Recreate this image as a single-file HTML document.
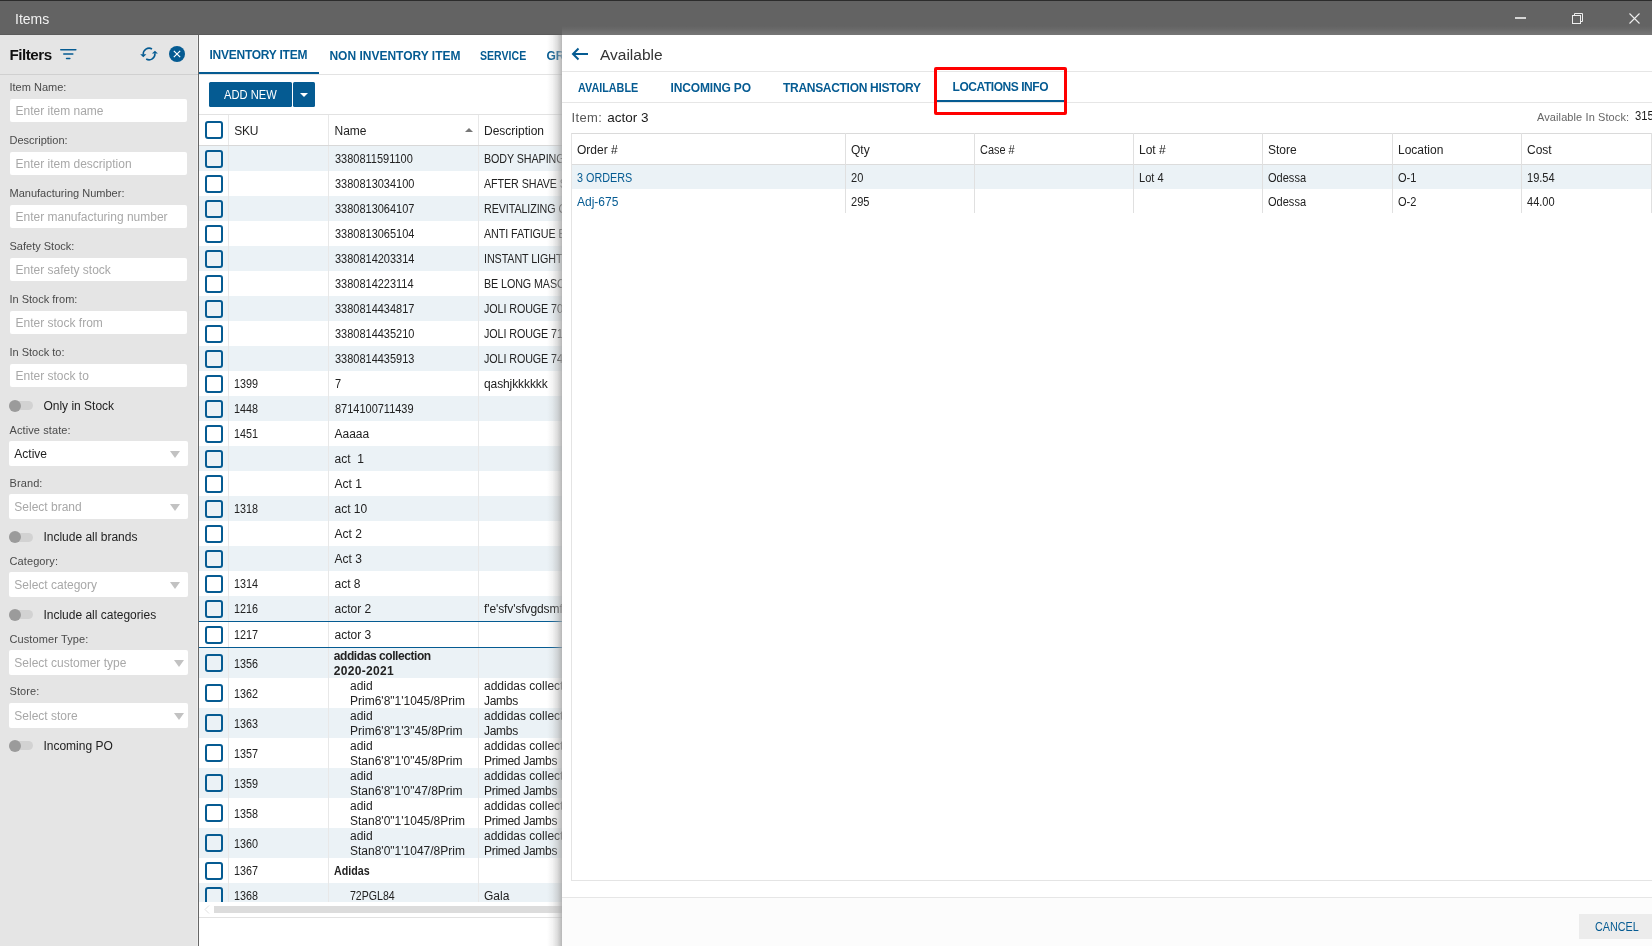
<!DOCTYPE html>
<html><head><meta charset="utf-8"><style>
html,body{margin:0;padding:0;}
body{width:1652px;height:946px;position:relative;overflow:hidden;background:#fff;font-family:"Liberation Sans",sans-serif;color:#222;}
.t{position:absolute;white-space:pre;}
.r{position:absolute;}
#root{position:absolute;left:0;top:0;width:1652px;height:946px;will-change:transform;}
</style></head><body>
<div id="root">
<div class="r" style="left:0px;top:0px;width:1652px;height:35px;background:linear-gradient(#2c2c2c 0px,#2c2c2c 1px,#636363 1px);"></div>
<div class="r" style="left:0px;top:34px;width:562px;height:1px;background:#5b5b5b;"></div>
<div class="r" style="left:562px;top:26px;width:1090px;height:9px;background:linear-gradient(rgba(255,255,255,0),rgba(255,255,255,0.03) 30%,rgba(255,255,255,0.09) 70%,rgba(255,255,255,0.12));"></div>
<div class="t" style="left:15px;top:12.15px;font-size:14px;line-height:14px;color:#f2f2f2;">Items</div>
<div class="r" style="left:1515px;top:17px;width:11px;height:2px;background:#d6d6d6;"></div>
<svg class="r" style="left:1570px;top:10.5px" width="16" height="14" viewBox="0 0 16 14"><rect x="2.5" y="4.5" width="8" height="8" fill="none" stroke="#eee" stroke-width="1"/><path d="M4.5 4.5 V2.5 H12.5 V10.5 H10.5" fill="none" stroke="#eee" stroke-width="1"/></svg>
<svg class="r" style="left:1629px;top:12.5px" width="11" height="11" viewBox="0 0 11 11"><path d="M0.5 0.5 L10.5 10.5 M10.5 0.5 L0.5 10.5" stroke="#eee" stroke-width="1.1"/></svg>
<div class="r" style="left:0px;top:35px;width:198px;height:911px;background:#e5e5e5;"></div>
<div class="r" style="left:197px;top:35px;width:1px;height:911px;background:#eeeeee;"></div>
<div class="r" style="left:198px;top:35px;width:1px;height:911px;background:#666666;"></div>
<div class="t" style="left:9.5px;top:47.43px;font-size:15.2px;line-height:15.2px;font-weight:700;color:#111;letter-spacing:-0.5px;">Filters</div>
<svg class="r" style="left:58px;top:46px" width="20" height="16" viewBox="0 0 20 16"><path d="M2.8 3.7 H17.8 M5.8 8 H14.8 M8.6 12.5 H11.8" stroke="#055b92" stroke-width="1.6" stroke-linecap="round"/></svg>
<svg class="r" style="left:139px;top:46px" width="20" height="16" viewBox="0 0 20 16"><path d="M4.3 8.6 A5.8 5.8 0 0 1 13.0 3.0" fill="none" stroke="#055b92" stroke-width="1.6"/><path d="M15.9 7.4 A5.8 5.8 0 0 1 7.2 13.0" fill="none" stroke="#055b92" stroke-width="1.6"/><path d="M1.2 8.3 L7.4 8.3 L4.3 11.3 Z" fill="#055b92"/><path d="M12.9 7.6 L18.9 7.6 L15.9 4.7 Z" fill="#055b92"/></svg>
<svg class="r" style="left:169px;top:46px" width="16" height="16" viewBox="0 0 16 16"><circle cx="8" cy="8" r="8" fill="#055b92"/><path d="M4.8 4.8 L11.2 11.2 M11.2 4.8 L4.8 11.2" stroke="#fff" stroke-width="1.2"/></svg>
<div class="r" style="left:0px;top:74px;width:198px;height:1px;background:#d0d0d0;"></div>
<div class="t" style="left:9.5px;top:81.69px;font-size:11px;line-height:11px;color:#4a4a4a;">Item Name:</div>
<div class="r" style="left:10px;top:99px;width:177px;height:23px;background:#fff;border-radius:2px;"></div>
<div class="t" style="left:15.5px;top:104.84px;font-size:12px;line-height:12px;color:#a8a8a8;">Enter item name</div>
<div class="t" style="left:9.5px;top:134.69px;font-size:11px;line-height:11px;color:#4a4a4a;">Description:</div>
<div class="r" style="left:10px;top:152px;width:177px;height:23px;background:#fff;border-radius:2px;"></div>
<div class="t" style="left:15.5px;top:157.84px;font-size:12px;line-height:12px;color:#a8a8a8;">Enter item description</div>
<div class="t" style="left:9.5px;top:187.69px;font-size:11px;line-height:11px;color:#4a4a4a;">Manufacturing Number:</div>
<div class="r" style="left:10px;top:205px;width:177px;height:23px;background:#fff;border-radius:2px;"></div>
<div class="t" style="left:15.5px;top:210.84px;font-size:12px;line-height:12px;color:#a8a8a8;">Enter manufacturing number</div>
<div class="t" style="left:9.5px;top:240.69px;font-size:11px;line-height:11px;color:#4a4a4a;">Safety Stock:</div>
<div class="r" style="left:10px;top:258px;width:177px;height:23px;background:#fff;border-radius:2px;"></div>
<div class="t" style="left:15.5px;top:263.84px;font-size:12px;line-height:12px;color:#a8a8a8;">Enter safety stock</div>
<div class="t" style="left:9.5px;top:293.69px;font-size:11px;line-height:11px;color:#4a4a4a;">In Stock from:</div>
<div class="r" style="left:10px;top:311px;width:177px;height:23px;background:#fff;border-radius:2px;"></div>
<div class="t" style="left:15.5px;top:316.84px;font-size:12px;line-height:12px;color:#a8a8a8;">Enter stock from</div>
<div class="t" style="left:9.5px;top:346.69px;font-size:11px;line-height:11px;color:#4a4a4a;">In Stock to:</div>
<div class="r" style="left:10px;top:364px;width:177px;height:23px;background:#fff;border-radius:2px;"></div>
<div class="t" style="left:15.5px;top:369.84px;font-size:12px;line-height:12px;color:#a8a8a8;">Enter stock to</div>
<div class="r" style="left:9px;top:401.0px;width:24px;height:9px;background:#d2d2d2;border-radius:5px;"></div>
<div class="r" style="left:9px;top:399.5px;width:12px;height:12px;background:#9b9b9b;border-radius:50%;"></div>
<div class="t" style="left:43.4px;top:399.84px;font-size:12px;line-height:12px;color:#1e1e1e;">Only in Stock</div>
<div class="t" style="left:9.5px;top:424.69px;font-size:11px;line-height:11px;color:#4a4a4a;letter-spacing:0.1px;">Active state:</div>
<div class="r" style="left:9px;top:441px;width:179px;height:25px;background:#fff;border-radius:2px;"></div>
<div class="t" style="left:14.3px;top:447.84px;font-size:12px;line-height:12px;color:#1e1e1e;">Active</div>
<svg class="r" style="left:170px;top:451px" width="10" height="7" viewBox="0 0 10 7"><path d="M0 0 H10 L5 7 Z" fill="#c2c2c2"/></svg>
<div class="t" style="left:9.5px;top:477.69px;font-size:11px;line-height:11px;color:#4a4a4a;letter-spacing:0.1px;">Brand:</div>
<div class="r" style="left:9px;top:494px;width:179px;height:25px;background:#fff;border-radius:2px;"></div>
<div class="t" style="left:14.3px;top:500.84px;font-size:12px;line-height:12px;color:#a8a8a8;">Select brand</div>
<svg class="r" style="left:170px;top:504px" width="10" height="7" viewBox="0 0 10 7"><path d="M0 0 H10 L5 7 Z" fill="#c2c2c2"/></svg>
<div class="r" style="left:9px;top:532.5px;width:24px;height:9px;background:#d2d2d2;border-radius:5px;"></div>
<div class="r" style="left:9px;top:531px;width:12px;height:12px;background:#9b9b9b;border-radius:50%;"></div>
<div class="t" style="left:43.4px;top:531.34px;font-size:12px;line-height:12px;color:#1e1e1e;">Include all brands</div>
<div class="t" style="left:9.5px;top:555.69px;font-size:11px;line-height:11px;color:#4a4a4a;letter-spacing:0.1px;">Category:</div>
<div class="r" style="left:9px;top:572px;width:179px;height:25px;background:#fff;border-radius:2px;"></div>
<div class="t" style="left:14.3px;top:578.84px;font-size:12px;line-height:12px;color:#a8a8a8;">Select category</div>
<svg class="r" style="left:170px;top:582px" width="10" height="7" viewBox="0 0 10 7"><path d="M0 0 H10 L5 7 Z" fill="#c2c2c2"/></svg>
<div class="r" style="left:9px;top:610.0px;width:24px;height:9px;background:#d2d2d2;border-radius:5px;"></div>
<div class="r" style="left:9px;top:608.5px;width:12px;height:12px;background:#9b9b9b;border-radius:50%;"></div>
<div class="t" style="left:43.4px;top:608.84px;font-size:12px;line-height:12px;color:#1e1e1e;">Include all categories</div>
<div class="t" style="left:9.5px;top:633.69px;font-size:11px;line-height:11px;color:#4a4a4a;letter-spacing:0.1px;">Customer Type:</div>
<div class="r" style="left:9px;top:650px;width:179px;height:25px;background:#fff;border-radius:2px;"></div>
<div class="t" style="left:14.3px;top:656.84px;font-size:12px;line-height:12px;color:#a8a8a8;">Select customer type</div>
<svg class="r" style="left:174px;top:660px" width="10" height="7" viewBox="0 0 10 7"><path d="M0 0 H10 L5 7 Z" fill="#c2c2c2"/></svg>
<div class="t" style="left:9.5px;top:686.19px;font-size:11px;line-height:11px;color:#4a4a4a;letter-spacing:0.1px;">Store:</div>
<div class="r" style="left:9px;top:703px;width:179px;height:25px;background:#fff;border-radius:2px;"></div>
<div class="t" style="left:14.3px;top:709.84px;font-size:12px;line-height:12px;color:#a8a8a8;">Select store</div>
<svg class="r" style="left:174px;top:713px" width="10" height="7" viewBox="0 0 10 7"><path d="M0 0 H10 L5 7 Z" fill="#c2c2c2"/></svg>
<div class="r" style="left:9px;top:741.0px;width:24px;height:9px;background:#d2d2d2;border-radius:5px;"></div>
<div class="r" style="left:9px;top:739.5px;width:12px;height:12px;background:#9b9b9b;border-radius:50%;"></div>
<div class="t" style="left:43.4px;top:739.84px;font-size:12px;line-height:12px;color:#1e1e1e;">Incoming PO</div>
<div class="r" style="left:199px;top:35px;width:363px;height:911px;background:#fff;"></div>
<div class="t" style="left:209.5px;top:48.84px;font-size:12px;line-height:12px;font-weight:700;color:#055b92;letter-spacing:-0.25px;">INVENTORY ITEM</div>
<div class="t" style="left:329.4px;top:49.84px;font-size:12px;line-height:12px;font-weight:700;color:#055b92;">NON INVENTORY ITEM</div>
<div class="t" style="left:480px;top:49.84px;font-size:12px;line-height:12px;transform:scaleX(0.88);transform-origin:0 0;font-weight:700;color:#055b92;">SERVICE</div>
<div class="t" style="left:546.6px;top:49.84px;font-size:12px;line-height:12px;font-weight:700;color:#055b92;letter-spacing:-0.25px;">GROUPS</div>
<div class="r" style="left:199px;top:74px;width:363px;height:1px;background:#e3e3e3;"></div>
<div class="r" style="left:199px;top:72px;width:120px;height:2px;background:#055b92;"></div>
<div class="r" style="left:209px;top:82px;width:83px;height:25px;background:#055b92;border-radius:1.5px;"></div>
<div class="t" style="left:224px;top:88.84px;font-size:12px;line-height:12px;transform:scaleX(0.93);transform-origin:0 0;color:#fff;">ADD NEW</div>
<div class="r" style="left:293px;top:82px;width:22px;height:25px;background:#055b92;border-radius:1.5px;"></div>
<svg class="r" style="left:299.8px;top:93.3px" width="8" height="4" viewBox="0 0 8 4"><path d="M0 0 H8 L4 4 Z" fill="#fff"/></svg>
<div class="r" style="left:199px;top:114px;width:363px;height:1px;background:#e2e2e2;"></div>
<div class="r" style="left:199px;top:145px;width:363px;height:1px;background:#d8d8d8;"></div>
<div class="r" style="left:205px;top:121px;width:18px;height:18px;background:transparent;box-sizing:border-box;border:2px solid #055b92;border-radius:3px;"></div>
<div class="t" style="left:234.3px;top:124.84px;font-size:12px;line-height:12px;letter-spacing:-0.3px;">SKU</div>
<div class="t" style="left:334.5px;top:124.84px;font-size:12px;line-height:12px;">Name</div>
<div class="t" style="left:484px;top:124.84px;font-size:12px;line-height:12px;">Description</div>
<svg class="r" style="left:465px;top:128px" width="8" height="4" viewBox="0 0 8 4"><path d="M0 4 H8 L4 0 Z" fill="#777"/></svg>
<div class="r" style="left:199px;top:146px;width:363px;height:25px;background:#ebf2f6;"></div>
<div class="r" style="left:205px;top:150px;width:18px;height:18px;background:transparent;box-sizing:border-box;border:2px solid #055b92;border-radius:3px;"></div>
<div class="t" style="left:334.5px;top:152.84px;font-size:12px;line-height:12px;transform:scaleX(0.915);transform-origin:0 0;">3380811591100</div>
<div class="t" style="left:484px;top:152.84px;font-size:12px;line-height:12px;transform:scaleX(0.895);transform-origin:0 0;letter-spacing:-0.1px;">BODY SHAPING CREAM</div>
<div class="r" style="left:205px;top:175px;width:18px;height:18px;background:transparent;box-sizing:border-box;border:2px solid #055b92;border-radius:3px;"></div>
<div class="t" style="left:334.5px;top:177.84px;font-size:12px;line-height:12px;transform:scaleX(0.915);transform-origin:0 0;">3380813034100</div>
<div class="t" style="left:484px;top:177.84px;font-size:12px;line-height:12px;transform:scaleX(0.895);transform-origin:0 0;letter-spacing:-0.1px;">AFTER SHAVE SPLASH</div>
<div class="r" style="left:199px;top:196px;width:363px;height:25px;background:#ebf2f6;"></div>
<div class="r" style="left:205px;top:200px;width:18px;height:18px;background:transparent;box-sizing:border-box;border:2px solid #055b92;border-radius:3px;"></div>
<div class="t" style="left:334.5px;top:202.84px;font-size:12px;line-height:12px;transform:scaleX(0.915);transform-origin:0 0;">3380813064107</div>
<div class="t" style="left:484px;top:202.84px;font-size:12px;line-height:12px;transform:scaleX(0.895);transform-origin:0 0;letter-spacing:-0.1px;">REVITALIZING CREAM</div>
<div class="r" style="left:205px;top:225px;width:18px;height:18px;background:transparent;box-sizing:border-box;border:2px solid #055b92;border-radius:3px;"></div>
<div class="t" style="left:334.5px;top:227.84px;font-size:12px;line-height:12px;transform:scaleX(0.915);transform-origin:0 0;">3380813065104</div>
<div class="t" style="left:484px;top:227.84px;font-size:12px;line-height:12px;transform:scaleX(0.895);transform-origin:0 0;letter-spacing:-0.1px;">ANTI FATIGUE EYE</div>
<div class="r" style="left:199px;top:246px;width:363px;height:25px;background:#ebf2f6;"></div>
<div class="r" style="left:205px;top:250px;width:18px;height:18px;background:transparent;box-sizing:border-box;border:2px solid #055b92;border-radius:3px;"></div>
<div class="t" style="left:334.5px;top:252.84px;font-size:12px;line-height:12px;transform:scaleX(0.915);transform-origin:0 0;">3380814203314</div>
<div class="t" style="left:484px;top:252.84px;font-size:12px;line-height:12px;transform:scaleX(0.895);transform-origin:0 0;letter-spacing:-0.1px;">INSTANT LIGHT</div>
<div class="r" style="left:205px;top:275px;width:18px;height:18px;background:transparent;box-sizing:border-box;border:2px solid #055b92;border-radius:3px;"></div>
<div class="t" style="left:334.5px;top:277.84px;font-size:12px;line-height:12px;transform:scaleX(0.915);transform-origin:0 0;">3380814223114</div>
<div class="t" style="left:484px;top:277.84px;font-size:12px;line-height:12px;transform:scaleX(0.895);transform-origin:0 0;letter-spacing:-0.1px;">BE LONG MASCARA</div>
<div class="r" style="left:199px;top:296px;width:363px;height:25px;background:#ebf2f6;"></div>
<div class="r" style="left:205px;top:300px;width:18px;height:18px;background:transparent;box-sizing:border-box;border:2px solid #055b92;border-radius:3px;"></div>
<div class="t" style="left:334.5px;top:302.84px;font-size:12px;line-height:12px;transform:scaleX(0.915);transform-origin:0 0;">3380814434817</div>
<div class="t" style="left:484px;top:302.84px;font-size:12px;line-height:12px;transform:scaleX(0.895);transform-origin:0 0;letter-spacing:-0.1px;">JOLI ROUGE 70</div>
<div class="r" style="left:205px;top:325px;width:18px;height:18px;background:transparent;box-sizing:border-box;border:2px solid #055b92;border-radius:3px;"></div>
<div class="t" style="left:334.5px;top:327.84px;font-size:12px;line-height:12px;transform:scaleX(0.915);transform-origin:0 0;">3380814435210</div>
<div class="t" style="left:484px;top:327.84px;font-size:12px;line-height:12px;transform:scaleX(0.895);transform-origin:0 0;letter-spacing:-0.1px;">JOLI ROUGE 71</div>
<div class="r" style="left:199px;top:346px;width:363px;height:25px;background:#ebf2f6;"></div>
<div class="r" style="left:205px;top:350px;width:18px;height:18px;background:transparent;box-sizing:border-box;border:2px solid #055b92;border-radius:3px;"></div>
<div class="t" style="left:334.5px;top:352.84px;font-size:12px;line-height:12px;transform:scaleX(0.915);transform-origin:0 0;">3380814435913</div>
<div class="t" style="left:484px;top:352.84px;font-size:12px;line-height:12px;transform:scaleX(0.895);transform-origin:0 0;letter-spacing:-0.1px;">JOLI ROUGE 74</div>
<div class="r" style="left:205px;top:375px;width:18px;height:18px;background:transparent;box-sizing:border-box;border:2px solid #055b92;border-radius:3px;"></div>
<div class="t" style="left:234.3px;top:377.84px;font-size:12px;line-height:12px;transform:scaleX(0.9);transform-origin:0 0;">1399</div>
<div class="t" style="left:334.5px;top:377.84px;font-size:12px;line-height:12px;transform:scaleX(0.915);transform-origin:0 0;">7</div>
<div class="t" style="left:484px;top:377.84px;font-size:12px;line-height:12px;letter-spacing:-0.1px;">qashjkkkkkk</div>
<div class="r" style="left:199px;top:396px;width:363px;height:25px;background:#ebf2f6;"></div>
<div class="r" style="left:205px;top:400px;width:18px;height:18px;background:transparent;box-sizing:border-box;border:2px solid #055b92;border-radius:3px;"></div>
<div class="t" style="left:234.3px;top:402.84px;font-size:12px;line-height:12px;transform:scaleX(0.9);transform-origin:0 0;">1448</div>
<div class="t" style="left:334.5px;top:402.84px;font-size:12px;line-height:12px;transform:scaleX(0.915);transform-origin:0 0;">8714100711439</div>
<div class="r" style="left:205px;top:425px;width:18px;height:18px;background:transparent;box-sizing:border-box;border:2px solid #055b92;border-radius:3px;"></div>
<div class="t" style="left:234.3px;top:427.84px;font-size:12px;line-height:12px;transform:scaleX(0.9);transform-origin:0 0;">1451</div>
<div class="t" style="left:334.5px;top:427.84px;font-size:12px;line-height:12px;">Aaaaa</div>
<div class="r" style="left:199px;top:446px;width:363px;height:25px;background:#ebf2f6;"></div>
<div class="r" style="left:205px;top:450px;width:18px;height:18px;background:transparent;box-sizing:border-box;border:2px solid #055b92;border-radius:3px;"></div>
<div class="t" style="left:334.5px;top:452.84px;font-size:12px;line-height:12px;">act&nbsp; 1</div>
<div class="r" style="left:205px;top:475px;width:18px;height:18px;background:transparent;box-sizing:border-box;border:2px solid #055b92;border-radius:3px;"></div>
<div class="t" style="left:334.5px;top:477.84px;font-size:12px;line-height:12px;">Act 1</div>
<div class="r" style="left:199px;top:496px;width:363px;height:25px;background:#ebf2f6;"></div>
<div class="r" style="left:205px;top:500px;width:18px;height:18px;background:transparent;box-sizing:border-box;border:2px solid #055b92;border-radius:3px;"></div>
<div class="t" style="left:234.3px;top:502.84px;font-size:12px;line-height:12px;transform:scaleX(0.9);transform-origin:0 0;">1318</div>
<div class="t" style="left:334.5px;top:502.84px;font-size:12px;line-height:12px;">act 10</div>
<div class="r" style="left:205px;top:525px;width:18px;height:18px;background:transparent;box-sizing:border-box;border:2px solid #055b92;border-radius:3px;"></div>
<div class="t" style="left:334.5px;top:527.84px;font-size:12px;line-height:12px;">Act 2</div>
<div class="r" style="left:199px;top:546px;width:363px;height:25px;background:#ebf2f6;"></div>
<div class="r" style="left:205px;top:550px;width:18px;height:18px;background:transparent;box-sizing:border-box;border:2px solid #055b92;border-radius:3px;"></div>
<div class="t" style="left:334.5px;top:552.84px;font-size:12px;line-height:12px;">Act 3</div>
<div class="r" style="left:205px;top:575px;width:18px;height:18px;background:transparent;box-sizing:border-box;border:2px solid #055b92;border-radius:3px;"></div>
<div class="t" style="left:234.3px;top:577.84px;font-size:12px;line-height:12px;transform:scaleX(0.9);transform-origin:0 0;">1314</div>
<div class="t" style="left:334.5px;top:577.84px;font-size:12px;line-height:12px;">act 8</div>
<div class="r" style="left:199px;top:596px;width:363px;height:25px;background:#ebf2f6;"></div>
<div class="r" style="left:205px;top:600px;width:18px;height:18px;background:transparent;box-sizing:border-box;border:2px solid #055b92;border-radius:3px;"></div>
<div class="t" style="left:234.3px;top:602.84px;font-size:12px;line-height:12px;transform:scaleX(0.9);transform-origin:0 0;">1216</div>
<div class="t" style="left:334.5px;top:602.84px;font-size:12px;line-height:12px;">actor 2</div>
<div class="t" style="left:484px;top:602.84px;font-size:12px;line-height:12px;letter-spacing:-0.1px;">f'e'sfv'sfvgdsmfg</div>
<div class="r" style="left:205px;top:626px;width:18px;height:18px;background:transparent;box-sizing:border-box;border:2px solid #055b92;border-radius:3px;"></div>
<div class="t" style="left:234.3px;top:628.84px;font-size:12px;line-height:12px;transform:scaleX(0.9);transform-origin:0 0;">1217</div>
<div class="t" style="left:334.5px;top:628.84px;font-size:12px;line-height:12px;">actor 3</div>
<div class="r" style="left:199px;top:648px;width:363px;height:30px;background:#ebf2f6;"></div>
<div class="r" style="left:205px;top:654px;width:18px;height:18px;background:transparent;box-sizing:border-box;border:2px solid #055b92;border-radius:3px;"></div>
<div class="t" style="left:234.3px;top:657.84px;font-size:12px;line-height:12px;transform:scaleX(0.9);transform-origin:0 0;">1356</div>
<div class="t" style="left:333.8px;top:649.84px;font-size:12px;line-height:12px;font-weight:700;letter-spacing:-0.43px;">addidas collection</div>
<div class="t" style="left:333.8px;top:664.84px;font-size:12px;line-height:12px;font-weight:700;letter-spacing:0.3px;">2020-2021</div>
<div class="r" style="left:205px;top:684px;width:18px;height:18px;background:transparent;box-sizing:border-box;border:2px solid #055b92;border-radius:3px;"></div>
<div class="t" style="left:234.3px;top:687.84px;font-size:12px;line-height:12px;transform:scaleX(0.9);transform-origin:0 0;">1362</div>
<div class="t" style="left:350px;top:679.84px;font-size:12px;line-height:12px;">adid</div>
<div class="t" style="left:350px;top:694.84px;font-size:12px;line-height:12px;">Prim6'8"1'1045/8Prim</div>
<div class="t" style="left:484px;top:679.84px;font-size:12px;line-height:12px;">addidas collection</div>
<div class="t" style="left:484px;top:694.84px;font-size:12px;line-height:12px;letter-spacing:-0.3px;">Jambs</div>
<div class="r" style="left:199px;top:708px;width:363px;height:30px;background:#ebf2f6;"></div>
<div class="r" style="left:205px;top:714px;width:18px;height:18px;background:transparent;box-sizing:border-box;border:2px solid #055b92;border-radius:3px;"></div>
<div class="t" style="left:234.3px;top:717.84px;font-size:12px;line-height:12px;transform:scaleX(0.9);transform-origin:0 0;">1363</div>
<div class="t" style="left:350px;top:709.84px;font-size:12px;line-height:12px;">adid</div>
<div class="t" style="left:350px;top:724.84px;font-size:12px;line-height:12px;">Prim6'8"1'3"45/8Prim</div>
<div class="t" style="left:484px;top:709.84px;font-size:12px;line-height:12px;">addidas collection</div>
<div class="t" style="left:484px;top:724.84px;font-size:12px;line-height:12px;letter-spacing:-0.3px;">Jambs</div>
<div class="r" style="left:205px;top:744px;width:18px;height:18px;background:transparent;box-sizing:border-box;border:2px solid #055b92;border-radius:3px;"></div>
<div class="t" style="left:234.3px;top:747.84px;font-size:12px;line-height:12px;transform:scaleX(0.9);transform-origin:0 0;">1357</div>
<div class="t" style="left:350px;top:739.84px;font-size:12px;line-height:12px;">adid</div>
<div class="t" style="left:350px;top:754.84px;font-size:12px;line-height:12px;">Stan6'8"1'0"45/8Prim</div>
<div class="t" style="left:484px;top:739.84px;font-size:12px;line-height:12px;">addidas collection</div>
<div class="t" style="left:484px;top:754.84px;font-size:12px;line-height:12px;letter-spacing:-0.3px;">Primed Jambs</div>
<div class="r" style="left:199px;top:768px;width:363px;height:30px;background:#ebf2f6;"></div>
<div class="r" style="left:205px;top:774px;width:18px;height:18px;background:transparent;box-sizing:border-box;border:2px solid #055b92;border-radius:3px;"></div>
<div class="t" style="left:234.3px;top:777.84px;font-size:12px;line-height:12px;transform:scaleX(0.9);transform-origin:0 0;">1359</div>
<div class="t" style="left:350px;top:769.84px;font-size:12px;line-height:12px;">adid</div>
<div class="t" style="left:350px;top:784.84px;font-size:12px;line-height:12px;">Stan6'8"1'0"47/8Prim</div>
<div class="t" style="left:484px;top:769.84px;font-size:12px;line-height:12px;">addidas collection</div>
<div class="t" style="left:484px;top:784.84px;font-size:12px;line-height:12px;letter-spacing:-0.3px;">Primed Jambs</div>
<div class="r" style="left:205px;top:804px;width:18px;height:18px;background:transparent;box-sizing:border-box;border:2px solid #055b92;border-radius:3px;"></div>
<div class="t" style="left:234.3px;top:807.84px;font-size:12px;line-height:12px;transform:scaleX(0.9);transform-origin:0 0;">1358</div>
<div class="t" style="left:350px;top:799.84px;font-size:12px;line-height:12px;">adid</div>
<div class="t" style="left:350px;top:814.84px;font-size:12px;line-height:12px;">Stan8'0"1'1045/8Prim</div>
<div class="t" style="left:484px;top:799.84px;font-size:12px;line-height:12px;">addidas collection</div>
<div class="t" style="left:484px;top:814.84px;font-size:12px;line-height:12px;letter-spacing:-0.3px;">Primed Jambs</div>
<div class="r" style="left:199px;top:828px;width:363px;height:30px;background:#ebf2f6;"></div>
<div class="r" style="left:205px;top:834px;width:18px;height:18px;background:transparent;box-sizing:border-box;border:2px solid #055b92;border-radius:3px;"></div>
<div class="t" style="left:234.3px;top:837.84px;font-size:12px;line-height:12px;transform:scaleX(0.9);transform-origin:0 0;">1360</div>
<div class="t" style="left:350px;top:829.84px;font-size:12px;line-height:12px;">adid</div>
<div class="t" style="left:350px;top:844.84px;font-size:12px;line-height:12px;">Stan8'0"1'1047/8Prim</div>
<div class="t" style="left:484px;top:829.84px;font-size:12px;line-height:12px;">addidas collection</div>
<div class="t" style="left:484px;top:844.84px;font-size:12px;line-height:12px;letter-spacing:-0.3px;">Primed Jambs</div>
<div class="r" style="left:205px;top:862px;width:18px;height:18px;background:transparent;box-sizing:border-box;border:2px solid #055b92;border-radius:3px;"></div>
<div class="t" style="left:234.3px;top:864.84px;font-size:12px;line-height:12px;transform:scaleX(0.9);transform-origin:0 0;">1367</div>
<div class="t" style="left:333.8px;top:864.84px;font-size:12px;line-height:12px;transform:scaleX(0.89);transform-origin:0 0;font-weight:700;">Adidas</div>
<div class="r" style="left:199px;top:883px;width:363px;height:19px;overflow:hidden">
<div class="r" style="left:0px;top:0px;width:363px;height:19px;background:#ebf2f6;"></div>
<div class="r" style="left:6px;top:4px;width:18px;height:18px;box-sizing:border-box;border:2px solid #055b92;border-radius:3px;"></div>
</div>
<div class="t" style="left:234.3px;top:889.84px;font-size:12px;line-height:12px;transform:scaleX(0.9);transform-origin:0 0;">1368</div>
<div class="t" style="left:350px;top:889.84px;font-size:12px;line-height:12px;transform:scaleX(0.88);transform-origin:0 0;">72PGL84</div>
<div class="t" style="left:484px;top:889.84px;font-size:12px;line-height:12px;">Gala</div>
<div class="r" style="left:228px;top:115px;width:1px;height:787px;background:#e8e8e8;"></div>
<div class="r" style="left:328px;top:115px;width:1px;height:787px;background:#e8e8e8;"></div>
<div class="r" style="left:478px;top:115px;width:1px;height:787px;background:#e8e8e8;"></div>
<div class="r" style="left:199px;top:145px;width:363px;height:1px;background:#d8d8d8;"></div>
<div class="r" style="left:199px;top:621px;width:363px;height:1px;background:#055b92;"></div>
<div class="r" style="left:199px;top:647px;width:363px;height:1px;background:#055b92;"></div>
<div class="r" style="left:214px;top:906px;width:348px;height:7px;background:#dcdcdc;"></div>
<svg class="r" style="left:204px;top:905px" width="6" height="9" viewBox="0 0 6 9"><path d="M5 0.5 L1 4.5 L5 8.5" fill="none" stroke="#e0e0e0" stroke-width="1"/></svg>
<div class="r" style="left:199px;top:917px;width:363px;height:1px;background:#e2e2e2;"></div>
<div class="r" style="left:547px;top:35px;width:15px;height:911px;background:linear-gradient(to right, rgba(165,165,165,0), rgba(165,165,165,0.12) 35%, rgba(165,165,165,0.4) 70%, rgba(165,165,165,0.8));"></div>
<div class="r" style="left:562px;top:35px;width:1090px;height:911px;background:#fff;"></div>
<svg class="r" style="left:571px;top:47px" width="18" height="14" viewBox="0 0 18 14"><path d="M17 7 H2.5 M7.5 1.5 L2 7 L7.5 12.5" fill="none" stroke="#055b92" stroke-width="2"/></svg>
<div class="t" style="left:600px;top:46.88px;font-size:15.5px;line-height:15.5px;color:#333;">Available</div>
<div class="r" style="left:562px;top:71px;width:1090px;height:1px;background:#e6e6e6;"></div>
<div class="t" style="left:578.3px;top:81.84px;font-size:12px;line-height:12px;transform:scaleX(0.9);transform-origin:0 0;font-weight:700;color:#055b92;">AVAILABLE</div>
<div class="t" style="left:670.5px;top:81.84px;font-size:12px;line-height:12px;font-weight:700;color:#055b92;letter-spacing:-0.15px;">INCOMING PO</div>
<div class="t" style="left:783px;top:81.84px;font-size:12px;line-height:12px;font-weight:700;color:#055b92;letter-spacing:-0.3px;">TRANSACTION HISTORY</div>
<div class="t" style="left:952.6px;top:80.84px;font-size:12px;line-height:12px;font-weight:700;color:#055b92;letter-spacing:-0.45px;">LOCATIONS INFO</div>
<div class="r" style="left:562px;top:102px;width:1090px;height:1px;background:#e6e6e6;"></div>
<div class="r" style="left:937px;top:100px;width:127px;height:2px;background:#055b92;"></div>
<div class="r" style="left:934px;top:67px;width:133px;height:48px;background:transparent;box-sizing:border-box;border:3px solid #ff0000;border-radius:2px;"></div>
<div class="t" style="left:571.4px;top:111.00px;font-size:13px;line-height:13px;color:#585858;letter-spacing:0.4px;">Item:</div>
<div class="t" style="left:607.2px;top:110.57px;font-size:13.5px;line-height:13.5px;color:#1a1a1a;">actor 3</div>
<div class="t" style="left:1537px;top:111.69px;font-size:11px;line-height:11px;color:#666;letter-spacing:0.1px;">Available In Stock:</div>
<div class="t" style="left:1635px;top:110.42px;font-size:12.5px;line-height:12.5px;transform:scaleX(0.9);transform-origin:0 0;color:#1a1a1a;">315</div>
<div class="r" style="left:571px;top:133px;width:1081px;height:748px;background:#fff;box-sizing:border-box;border:1px solid #e4e4e4;border-top-color:#dadada;border-right:none;"></div>
<div class="r" style="left:1651px;top:133px;width:1px;height:80px;background:#e0e0e0;"></div>
<div class="r" style="left:572px;top:165px;width:1079px;height:24px;background:#ebf2f6;"></div>
<div class="r" style="left:572px;top:164px;width:1079px;height:1px;background:#dcdcdc;"></div>
<div class="t" style="left:577px;top:143.84px;font-size:12px;line-height:12px;">Order #</div>
<div class="r" style="left:845px;top:133px;width:1px;height:80px;background:#e0e0e0;"></div>
<div class="t" style="left:851px;top:143.84px;font-size:12px;line-height:12px;">Qty</div>
<div class="r" style="left:974px;top:133px;width:1px;height:80px;background:#e0e0e0;"></div>
<div class="t" style="left:980px;top:143.84px;font-size:12px;line-height:12px;transform:scaleX(0.91);transform-origin:0 0;">Case #</div>
<div class="r" style="left:1133px;top:133px;width:1px;height:80px;background:#e0e0e0;"></div>
<div class="t" style="left:1139px;top:143.84px;font-size:12px;line-height:12px;">Lot #</div>
<div class="r" style="left:1262px;top:133px;width:1px;height:80px;background:#e0e0e0;"></div>
<div class="t" style="left:1268px;top:143.84px;font-size:12px;line-height:12px;">Store</div>
<div class="r" style="left:1392px;top:133px;width:1px;height:80px;background:#e0e0e0;"></div>
<div class="t" style="left:1398px;top:143.84px;font-size:12px;line-height:12px;">Location</div>
<div class="r" style="left:1521px;top:133px;width:1px;height:80px;background:#e0e0e0;"></div>
<div class="t" style="left:1527px;top:143.84px;font-size:12px;line-height:12px;">Cost</div>
<div class="t" style="left:577px;top:171.84px;font-size:12px;line-height:12px;transform:scaleX(0.9);transform-origin:0 0;color:#055b92;">3 ORDERS</div>
<div class="t" style="left:577px;top:195.84px;font-size:12px;line-height:12px;color:#055b92;">Adj-675</div>
<div class="t" style="left:851px;top:171.84px;font-size:12px;line-height:12px;transform:scaleX(0.92);transform-origin:0 0;">20</div>
<div class="t" style="left:851px;top:195.84px;font-size:12px;line-height:12px;transform:scaleX(0.92);transform-origin:0 0;">295</div>
<div class="t" style="left:1139px;top:171.84px;font-size:12px;line-height:12px;transform:scaleX(0.92);transform-origin:0 0;">Lot 4</div>
<div class="t" style="left:1268px;top:171.84px;font-size:12px;line-height:12px;transform:scaleX(0.92);transform-origin:0 0;">Odessa</div>
<div class="t" style="left:1268px;top:195.84px;font-size:12px;line-height:12px;transform:scaleX(0.92);transform-origin:0 0;">Odessa</div>
<div class="t" style="left:1398px;top:171.84px;font-size:12px;line-height:12px;transform:scaleX(0.92);transform-origin:0 0;">O-1</div>
<div class="t" style="left:1398px;top:195.84px;font-size:12px;line-height:12px;transform:scaleX(0.92);transform-origin:0 0;">O-2</div>
<div class="t" style="left:1527px;top:171.84px;font-size:12px;line-height:12px;transform:scaleX(0.92);transform-origin:0 0;">19.54</div>
<div class="t" style="left:1527px;top:195.84px;font-size:12px;line-height:12px;transform:scaleX(0.92);transform-origin:0 0;">44.00</div>
<div class="r" style="left:562px;top:898px;width:1090px;height:48px;background:#fcfcfc;"></div>
<div class="r" style="left:562px;top:897px;width:1090px;height:1px;background:#e6e6e6;"></div>
<div class="r" style="left:1579px;top:914px;width:73px;height:25px;background:#ececec;"></div>
<div class="t" style="left:1594.6px;top:920.84px;font-size:12px;line-height:12px;transform:scaleX(0.9);transform-origin:0 0;color:#055b92;">CANCEL</div>
</div></body></html>
